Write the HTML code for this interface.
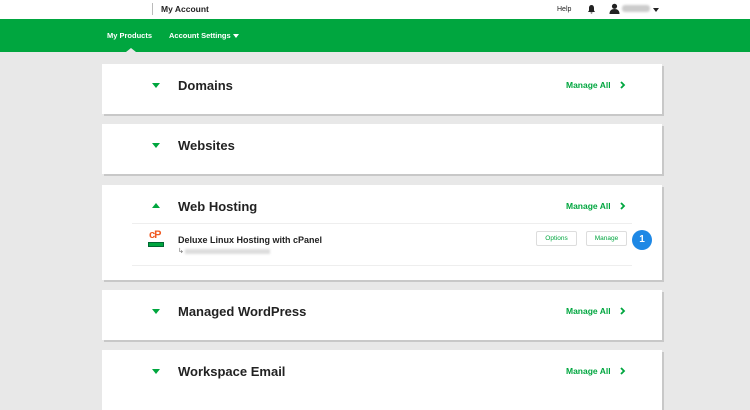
<!DOCTYPE html>
<html><head><style>
*{margin:0;padding:0;box-sizing:border-box}
body{width:750px;height:400px;overflow:hidden;background:#e8e8e8;font-family:"Liberation Sans",Arial,sans-serif;position:relative}
.top{position:absolute;left:0;top:0;width:750px;height:19px;background:#fff}
.nav{position:absolute;left:0;top:19px;width:750px;height:33px;background:#00a63f}
.t{position:absolute;white-space:nowrap}
.card{position:absolute;left:102px;width:560px;background:#fff;box-shadow:2px 2px 0 #c8c8c8}
.tri{position:absolute;left:50px;width:0;height:0;border-left:4px solid transparent;border-right:4px solid transparent}
.h{position:absolute;left:76px;font-size:13px;font-weight:bold;color:#222}
.ma{position:absolute;left:464px;font-size:8.5px;font-weight:bold;color:#00a63f}
.ch{position:absolute;left:518px}
.btn{position:absolute;height:15px;border:1px solid #ddd;border-radius:2px;font-size:6.5px;color:#00a63f;text-align:center;line-height:13px}
</style></head><body>
<div class="top"></div>
<div class="t" style="left:152px;top:3px;width:1px;height:12px;background:#bbb"></div>
<div class="t" style="left:161px;top:4px;font-size:8.5px;font-weight:bold;color:#222">My Account</div>
<div class="t" style="left:557px;top:6px;font-size:7px;color:#222">Help</div>
<svg class="t" style="left:587px;top:4px" width="9" height="10" viewBox="0 0 9 10"><path d="M4.5 1C2.8 1 2 2.5 2 4v2.5L1 8h7L7 6.5V4C7 2.5 6.2 1 4.5 1z M3.5 8.5h2a1 1 0 0 1-2 0z" fill="#222"/></svg>
<svg class="t" style="left:609px;top:3px" width="11" height="11" viewBox="0 0 11 11"><circle cx="5.5" cy="3.3" r="2.6" fill="#222"/><path d="M0.5 11c0-3.5 2-5 5-5s5 1.5 5 5z" fill="#222"/></svg>
<div class="t" style="left:622px;top:5px;width:28px;height:7px;background:#ccc;border-radius:3px;filter:blur(1px)"></div>
<div class="t" style="left:653px;top:8px;border-left:3px solid transparent;border-right:3px solid transparent;border-top:4px solid #222"></div>
<div class="nav"></div>
<div class="t" style="left:107px;top:31px;font-size:7.5px;font-weight:bold;color:#fff">My Products</div>
<div class="t" style="left:169px;top:31px;font-size:7.5px;font-weight:bold;color:#fff">Account Settings</div>
<div class="t" style="left:233px;top:34px;border-left:3px solid transparent;border-right:3px solid transparent;border-top:4px solid #fff"></div>
<div class="t" style="left:126px;top:48px;border-left:5px solid transparent;border-right:5px solid transparent;border-bottom:4px solid #e8e8e8"></div>

<div class="card" style="top:64px;height:50px"><div class="tri" style="top:19px;border-top:5px solid #00a63f"></div><div class="h" style="top:14px">Domains</div><div class="ma" style="top:16px">Manage All</div><svg class="ch" style="top:17px" width="6" height="8" viewBox="0 0 6 8"><path d="M1 1l3 3-3 3" stroke="#00a63f" stroke-width="1.8" fill="none"/></svg></div>
<div class="card" style="top:124px;height:50px"><div class="tri" style="top:19px;border-top:5px solid #00a63f"></div><div class="h" style="top:14px">Websites</div></div>
<div class="card" style="top:185px;height:95px">
<div class="tri" style="top:18px;border-bottom:5px solid #00a63f"></div><div class="h" style="top:14px">Web Hosting</div><div class="ma" style="top:16px">Manage All</div><svg class="ch" style="top:17px" width="6" height="8" viewBox="0 0 6 8"><path d="M1 1l3 3-3 3" stroke="#00a63f" stroke-width="1.8" fill="none"/></svg>
<div style="position:absolute;left:30px;top:38px;width:500px;height:1px;background:#eee"></div>
<div style="position:absolute;left:30px;top:80px;width:500px;height:1px;background:#eee"></div>
<div class="t" style="left:47px;top:44px;font-size:11px;font-weight:bold;color:#f05a22;letter-spacing:-1px">cP</div>
<div class="t" style="left:46px;top:57px;width:16px;height:5px;background:#00a63f;border:1px solid #063"></div>
<div class="t" style="left:76px;top:50px;font-size:9px;font-weight:bold;color:#222">Deluxe Linux Hosting with cPanel</div>
<div class="t" style="left:76px;top:62px;font-size:7px;color:#666">↳</div>
<div class="t" style="left:83px;top:64px;width:85px;height:5px;background:#ddd;filter:blur(1px)"></div>
<div class="btn" style="left:434px;top:46px;width:41px">Options</div>
<div class="btn" style="left:484px;top:46px;width:41px">Manage</div>
</div>
<div class="t" style="left:632px;top:230px;width:20px;height:20px;border-radius:50%;background:#1e88e5;color:#fff;font-size:10px;font-weight:bold;text-align:center;line-height:20px">1</div>
<div class="card" style="top:290px;height:50px"><div class="tri" style="top:19px;border-top:5px solid #00a63f"></div><div class="h" style="top:14px">Managed WordPress</div><div class="ma" style="top:16px">Manage All</div><svg class="ch" style="top:17px" width="6" height="8" viewBox="0 0 6 8"><path d="M1 1l3 3-3 3" stroke="#00a63f" stroke-width="1.8" fill="none"/></svg></div>
<div class="card" style="top:350px;height:60px"><div class="tri" style="top:19px;border-top:5px solid #00a63f"></div><div class="h" style="top:14px">Workspace Email</div><div class="ma" style="top:16px">Manage All</div><svg class="ch" style="top:17px" width="6" height="8" viewBox="0 0 6 8"><path d="M1 1l3 3-3 3" stroke="#00a63f" stroke-width="1.8" fill="none"/></svg></div>
</body></html>
